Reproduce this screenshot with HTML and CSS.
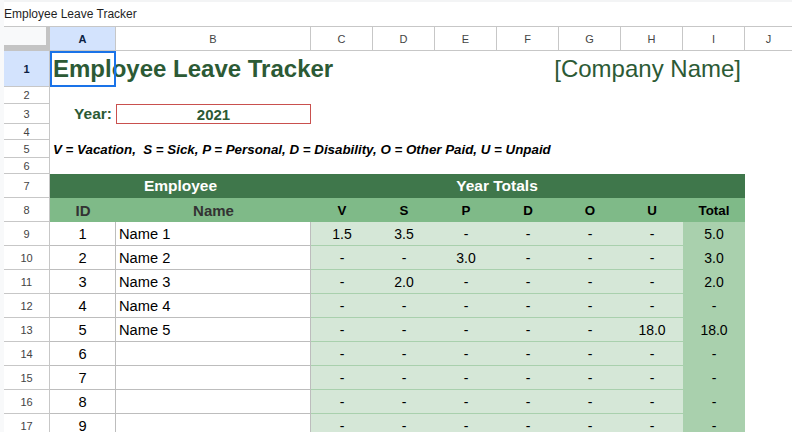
FILE: index.html
```html
<!DOCTYPE html>
<html lang="en">
<head>
    <meta charset="UTF-8">
    <title>Employee Leave Tracker</title>
    <link rel="stylesheet" href="styles.css">
</head>
<body>
    <div class="doc-title">Employee Leave Tracker</div>

    <div class="sheet">
        <!-- Column letters -->
        <div class="row heads">
            <div class="corner"></div>
            <div class="ch on">A</div>
            <div class="ch">B</div>
            <div class="ch">C</div>
            <div class="ch">D</div>
            <div class="ch">E</div>
            <div class="ch">F</div>
            <div class="ch">G</div>
            <div class="ch">H</div>
            <div class="ch">I</div>
            <div class="ch">J</div>
        </div>

        <!-- Title -->
        <div class="row r1">
            <div class="rh on">1</div>
            <div class="cell a1"><span class="title">Employee Leave Tracker</span></div>
            <div class="cell span5"></div>
            <div class="cell span3 company">[Company Name]</div>
        </div>
        <div class="row r2"><div class="rh">2</div></div>

        <!-- Year -->
        <div class="row r3">
            <div class="rh">3</div>
            <div class="cell year-label">Year:</div>
            <div class="cell year-box">2021</div>
        </div>
        <div class="row r4"><div class="rh">4</div></div>

        <!-- Legend -->
        <div class="row r5">
            <div class="rh">5</div>
            <div class="cell legend">V = Vacation,&nbsp; S = Sick, P = Personal, D = Disability, O = Other Paid, U = Unpaid</div>
        </div>
        <div class="row r6"><div class="rh">6</div></div>

        <!-- Table header -->
        <div class="row">
            <div class="rh">7</div>
            <div class="cell dark span2">Employee</div>
            <div class="cell dark span6">Year Totals</div>
            <div class="cell dark"></div>
        </div>
        <div class="row">
            <div class="rh">8</div>
            <div class="cell mid big">ID</div>
            <div class="cell mid big">Name</div>
            <div class="cell mid">V</div>
            <div class="cell mid">S</div>
            <div class="cell mid">P</div>
            <div class="cell mid">D</div>
            <div class="cell mid">O</div>
            <div class="cell mid">U</div>
            <div class="cell mid">Total</div>
        </div>

        <!-- Employees -->
        <div class="row">
            <div class="rh">9</div>
            <div class="cell id">1</div>
            <div class="cell name">Name 1</div>
            <div class="cell g">1.5</div>
            <div class="cell g">3.5</div>
            <div class="cell g">-</div>
            <div class="cell g">-</div>
            <div class="cell g">-</div>
            <div class="cell g">-</div>
            <div class="cell tot">5.0</div>
        </div>
        <div class="row">
            <div class="rh">10</div>
            <div class="cell id">2</div>
            <div class="cell name">Name 2</div>
            <div class="cell g">-</div>
            <div class="cell g">-</div>
            <div class="cell g">3.0</div>
            <div class="cell g">-</div>
            <div class="cell g">-</div>
            <div class="cell g">-</div>
            <div class="cell tot">3.0</div>
        </div>
        <div class="row">
            <div class="rh">11</div>
            <div class="cell id">3</div>
            <div class="cell name">Name 3</div>
            <div class="cell g">-</div>
            <div class="cell g">2.0</div>
            <div class="cell g">-</div>
            <div class="cell g">-</div>
            <div class="cell g">-</div>
            <div class="cell g">-</div>
            <div class="cell tot">2.0</div>
        </div>
        <div class="row">
            <div class="rh">12</div>
            <div class="cell id">4</div>
            <div class="cell name">Name 4</div>
            <div class="cell g">-</div>
            <div class="cell g">-</div>
            <div class="cell g">-</div>
            <div class="cell g">-</div>
            <div class="cell g">-</div>
            <div class="cell g">-</div>
            <div class="cell tot">-</div>
        </div>
        <div class="row">
            <div class="rh">13</div>
            <div class="cell id">5</div>
            <div class="cell name">Name 5</div>
            <div class="cell g">-</div>
            <div class="cell g">-</div>
            <div class="cell g">-</div>
            <div class="cell g">-</div>
            <div class="cell g">-</div>
            <div class="cell g">18.0</div>
            <div class="cell tot">18.0</div>
        </div>
        <div class="row">
            <div class="rh">14</div>
            <div class="cell id">6</div>
            <div class="cell name"></div>
            <div class="cell g">-</div>
            <div class="cell g">-</div>
            <div class="cell g">-</div>
            <div class="cell g">-</div>
            <div class="cell g">-</div>
            <div class="cell g">-</div>
            <div class="cell tot">-</div>
        </div>
        <div class="row">
            <div class="rh">15</div>
            <div class="cell id">7</div>
            <div class="cell name"></div>
            <div class="cell g">-</div>
            <div class="cell g">-</div>
            <div class="cell g">-</div>
            <div class="cell g">-</div>
            <div class="cell g">-</div>
            <div class="cell g">-</div>
            <div class="cell tot">-</div>
        </div>
        <div class="row">
            <div class="rh">16</div>
            <div class="cell id">8</div>
            <div class="cell name"></div>
            <div class="cell g">-</div>
            <div class="cell g">-</div>
            <div class="cell g">-</div>
            <div class="cell g">-</div>
            <div class="cell g">-</div>
            <div class="cell g">-</div>
            <div class="cell tot">-</div>
        </div>
        <div class="row">
            <div class="rh">17</div>
            <div class="cell id">9</div>
            <div class="cell name"></div>
            <div class="cell g">-</div>
            <div class="cell g">-</div>
            <div class="cell g">-</div>
            <div class="cell g">-</div>
            <div class="cell g">-</div>
            <div class="cell g">-</div>
            <div class="cell tot">-</div>
        </div>
    </div>
</body>
</html>
```

FILE: styles.css
```css
* {
    margin: 0;
    padding: 0;
    box-sizing: border-box;
}

html, body {
    width: 792px;
    height: 432px;
    overflow: hidden;
}

body {
    background: #f8f9fa;
    padding-left: 4px;
    font-family: "Liberation Sans", Arial, sans-serif;
    color: #000;
}

.doc-title {
    height: 27px;
    background: #fff;
    border-top: 2px solid #f3f4f5;
    border-bottom: 1px solid #c7c7c7;
    font-size: 12px;
    line-height: 24px;
    color: #1f1f1f;
}

.sheet {
    background: #fff;
}

.row {
    display: grid;
    grid-template-columns: 46px 66px 195px repeat(7, 62px) 1fr;
    height: 24px;
}

.r1 { height: 36px; }
.r2 { height: 17px; }
.r3 { height: 20px; }
.r4 { height: 16px; }
.r5 { height: 18px; }
.r6 { height: 16px; }

/* Headers */
.corner {
    background: #f8f9fa;
    border-right: 4px solid #c4c4c4;
    border-bottom: 6px solid #c4c4c4;
}

.ch, .rh {
    display: flex;
    align-items: center;
    justify-content: center;
    font-size: 11px;
    color: #444;
    border-right: 1px solid #c7c7c7;
    border-bottom: 1px solid #c7c7c7;
}

.ch.on, .rh.on {
    background: #d3e3fd;
    color: #0b1f44;
    font-weight: bold;
}

.ch:last-child {
    border-right: none;
}

/* Cells */
.cell {
    display: flex;
    align-items: center;
    white-space: nowrap;
    min-width: 0;
}

.span2 { grid-column: span 2; }
.span3 { grid-column: span 3; }
.span5 { grid-column: span 5; }
.span6 { grid-column: span 6; }

.a1 {
    position: relative;
    overflow: visible;
    padding-left: 3px;
}

/* selection box over A1 */
.a1::after {
    content: "";
    position: absolute;
    top: 0;
    left: 0;
    right: 0;
    bottom: 0;
    border: 2px solid #1a73e8;
}

.title {
    font-size: 24px;
    font-weight: bold;
    color: #2c5a35;
    line-height: 36px;
}

.company {
    justify-content: flex-end;
    padding-right: 4px;
    font-size: 24px;
    color: #2c5a35;
    line-height: 36px;
}

.year-label {
    justify-content: flex-end;
    padding-right: 4px;
    font-size: 15.5px;
    font-weight: bold;
    color: #2c5a35;
}

.year-box {
    justify-content: center;
    border: 1px solid #c9504e;
    font-size: 15px;
    font-weight: bold;
    color: #2c5a35;
}

.legend {
    grid-column: span 10;
    padding-left: 3px;
    font-size: 13.33px;
    font-weight: bold;
    font-style: italic;
}

/* Table */
.dark {
    background: #3f774b;
    color: #fff;
    font-size: 15.5px;
    font-weight: bold;
    justify-content: center;
}

.mid {
    background: #7fba88;
    font-size: 13.33px;
    font-weight: bold;
    justify-content: center;
}

.mid.big {
    font-size: 15px;
    color: #333;
}

.id, .name {
    font-size: 14.67px;
    border-right: 1px solid #bdbdbd;
    border-bottom: 1px solid #bdbdbd;
}

.id {
    justify-content: center;
}

.name {
    padding-left: 3px;
}

.g {
    justify-content: center;
    background: #d5e7d7;
    border-bottom: 1px solid #a9d0ad;
    font-size: 14px;
}

.tot {
    justify-content: center;
    background: #a9d0ad;
    font-size: 14px;
}
```
